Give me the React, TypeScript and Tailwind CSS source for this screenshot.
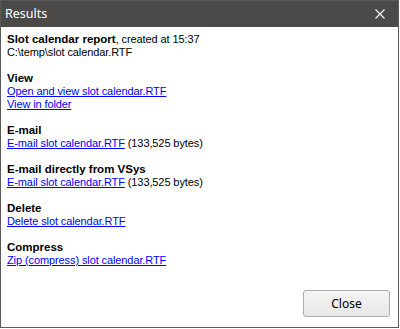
import React from "react";

const sections = [
  { title: "View", links: [{ text: "Open and view slot calendar.RTF" }, { text: "View in folder" }] },
  { title: "E-mail", links: [{ text: "E-mail slot calendar.RTF", note: " (133,525 bytes)" }] },
  { title: "E-mail directly from VSys", links: [{ text: "E-mail slot calendar.RTF", note: " (133,525 bytes)" }] },
  { title: "Delete", links: [{ text: "Delete slot calendar.RTF" }] },
  { title: "Compress", links: [{ text: "Zip (compress) slot calendar.RTF" }] },
];

export default function App() {
  return (
    <div className="w-[400px] h-[329px] bg-white">
      <div className="w-[399px] h-[328px] flex flex-col border border-[#5a5a5a] bg-white">
        {/* Title bar */}
        <div className="h-[26px] shrink-0 bg-[#4b4a48] flex items-center justify-between pl-[4px] pr-[13px]">
          <span className="text-white text-[12.5px] font-['Noto_Sans',sans-serif]">Results</span>
          <svg width="10" height="10" viewBox="0 0 10 10" className="text-white">
            <path d="M0.5 0.5L9.5 9.5M9.5 0.5L0.5 9.5" stroke="currentColor" strokeWidth="1.1" />
          </svg>
        </div>

        {/* Body */}
        <div className="flex-1 flex flex-col px-[6px] pt-[6px] font-['Liberation_Sans',sans-serif] text-[11px] tracking-[-0.1px] leading-[13px] text-black">
          <div>
            <span className="font-bold text-[11.5px] tracking-normal">Slot calendar report</span>, created at 15:37
          </div>
          <div>C:\temp\slot calendar.RTF</div>

          {sections.map((s) => (
            <div key={s.title} className="mt-[13px]">
              <div className="font-bold text-[11.5px] tracking-normal">{s.title}</div>
              {s.links.map((l, i) => (
                <div key={i}>
                  <a href="#" className="text-[#0000ff] underline">{l.text}</a>
                  {l.note}
                </div>
              ))}
            </div>
          ))}

          <div className="mt-auto mb-[10px] flex justify-end pr-[2px]">
            <button className="w-[87px] h-[27px] rounded-[3px] border border-[#adadad] bg-gradient-to-b from-[#f4f4f4] to-[#e8e8e8] text-[12px] tracking-normal font-['Noto_Sans',sans-serif] text-black">
              Close
            </button>
          </div>
        </div>
      </div>
    </div>
  );
}
